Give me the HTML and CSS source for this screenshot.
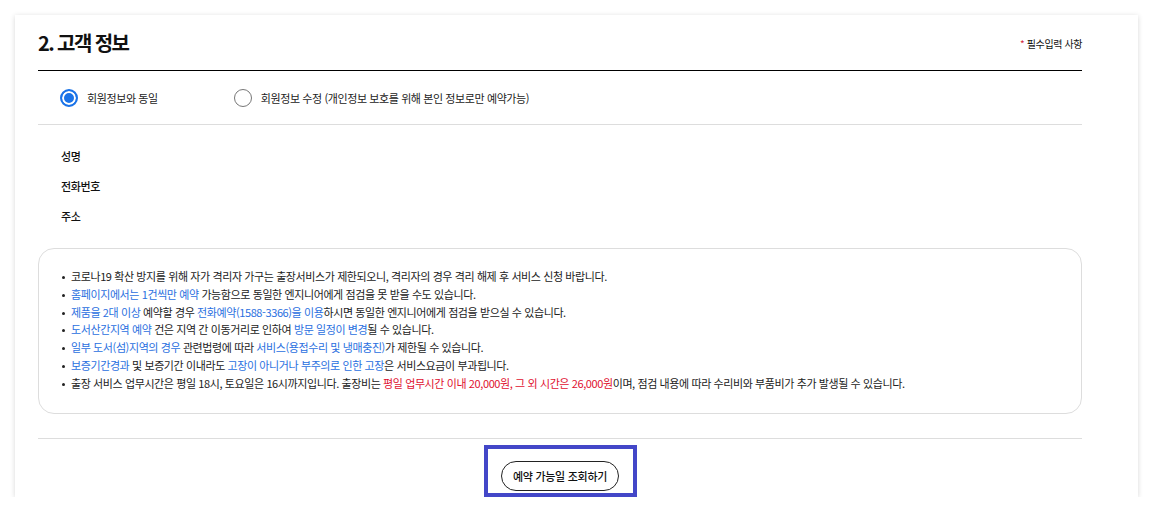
FILE: index.html
```html
<!DOCTYPE html>
<html lang="ko">
<head>
<meta charset="utf-8">
<link rel="stylesheet" href="styles.css">
</head>
<body>
<div class="page">
  <section class="card">
    <header class="head">
      <h2 class="title">2. 고객 정보</h2>
      <span class="req"><span class="star">*</span> 필수입력 사항</span>
    </header>
    <div class="radios">
      <label class="opt"><span class="radio on"></span>회원정보와 동일</label>
      <label class="opt"><span class="radio"></span>회원정보 수정 (개인정보 보호를 위해 본인 정보로만 예약가능)</label>
    </div>
    <div class="fields">
      <div class="field">성명</div>
      <div class="field">전화번호</div>
      <div class="field">주소</div>
    </div>
    <div class="notice">
      <ul class="notes">
        <li>코로나19 확산 방지를 위해 자가 격리자 가구는 출장서비스가 제한되오니, 격리자의 경우 격리 해제 후 서비스 신청 바랍니다.</li>
        <li><span class="blue">홈페이지에서는 1건씩만 예약</span> 가능함으로 동일한 엔지니어에게 점검을 못 받을 수도 있습니다.</li>
        <li><span class="blue">제품을 2대 이상</span> 예약할 경우 <span class="blue">전화예약(1588-3366)을 이용</span>하시면 동일한 엔지니어에게 점검을 받으실 수 있습니다.</li>
        <li><span class="blue">도서산간지역 예약</span> 건은 지역 간 이동거리로 인하여 <span class="blue">방문 일정이 변경</span>될 수 있습니다.</li>
        <li><span class="blue">일부 도서(섬)지역의 경우</span> 관련법령에 따라 <span class="blue">서비스(용접수리 및 냉매충진)</span>가 제한될 수 있습니다.</li>
        <li><span class="blue">보증기간경과</span> 및 보증기간 이내라도 <span class="blue">고장이 아니거나 부주의로 인한 고장</span>은 서비스요금이 부과됩니다.</li>
        <li>출장 서비스 업무시간은 평일 18시, 토요일은 16시까지입니다. 출장비는 <span class="red">평일 업무시간 이내 20,000원, 그 외 시간은 26,000원</span>이며, 점검 내용에 따라 수리비와 부품비가 추가 발생될 수 있습니다.</li>
      </ul>
    </div>
    <div class="actions">
      <div class="focus">
        <button class="btn" type="button">예약 가능일 조회하기</button>
      </div>
    </div>
  </section>
</div>
</body>
</html>
```

FILE: styles.css
```css
* { box-sizing: border-box; }
html, body { margin: 0; padding: 0; background: #fff; }
body {
  font-family: "Noto Sans CJK KR", "Noto Sans", sans-serif;
  color: #111;
  letter-spacing: -0.025em;
}
.page { padding: 15px 15px 0 15px; }
.card {
  width: 1123px;
  height: 482px;
  background: #fff;
  box-shadow: 0 1px 5px rgba(0,0,0,0.16);
  padding: 0 56px 0 23px;
  display: flex;
  flex-direction: column;
}
.head {
  height: 56px;
  display: flex;
  align-items: center;
  justify-content: space-between;
  border-bottom: 1px solid #000;
}
.title {
  margin: 0;
  font-size: 20px;
  font-weight: 700;
  letter-spacing: -0.08em;
  color: #111;
  line-height: 1;
}
.req { font-size: 10px; color: #111; padding-top: 2px; }
.star { color: #d2263c; }
.radios {
  height: 54px;
  display: flex;
  align-items: center;
  padding-left: 22px;
  gap: 76px;
  border-bottom: 1px solid #ddd;
}
.opt {
  display: flex;
  align-items: center;
  gap: 9px;
  font-size: 11px;
  color: #222;
}
.radio {
  width: 18px;
  height: 18px;
  border-radius: 50%;
  border: 1px solid #777;
  background: #fff;
  flex: none;
}
.radio.on {
  border: 2px solid #1a73e8;
  box-shadow: inset 0 0 0 2px #fff;
  background: #1a73e8;
}
.fields {
  padding: 16px 0 0 23px;
  display: flex;
  flex-direction: column;
}
.field {
  height: 30px;
  line-height: 30px;
  font-size: 11px;
  font-weight: 500;
  color: #111;
}
.notice {
  margin-top: 17px;
  height: 166px;
  border: 1px solid #ddd;
  border-radius: 16px;
  padding: 19px 0 0 23px;
}
.notes {
  list-style: none;
  margin: 0;
  padding: 0;
  font-size: 11px;
  line-height: 17.8px;
  color: #222;
}
.notes li { position: relative; padding-left: 9px; }
.notes li::before {
  content: "";
  position: absolute;
  left: 0;
  top: 8px;
  width: 3px;
  height: 3px;
  border-radius: 50%;
  background: #222;
}
.blue { color: #2a6fe0; }
.red { color: #e0102f; }
.actions {
  margin-top: 24px;
  border-top: 1px solid #ddd;
  padding-top: 6px;
  display: flex;
  justify-content: center;
}
.focus {
  width: 153px;
  height: 52px;
  border: 4px solid #4347c8;
  display: flex;
  justify-content: center;
  padding-top: 12px;
}
.btn {
  width: 118px;
  height: 30px;
  border: 1px solid #222;
  border-radius: 15px;
  background: #fff;
  font-family: inherit;
  font-size: 11px;
  font-weight: 500;
  letter-spacing: -0.025em;
  color: #111;
  padding: 0;
  cursor: pointer;
}
```
